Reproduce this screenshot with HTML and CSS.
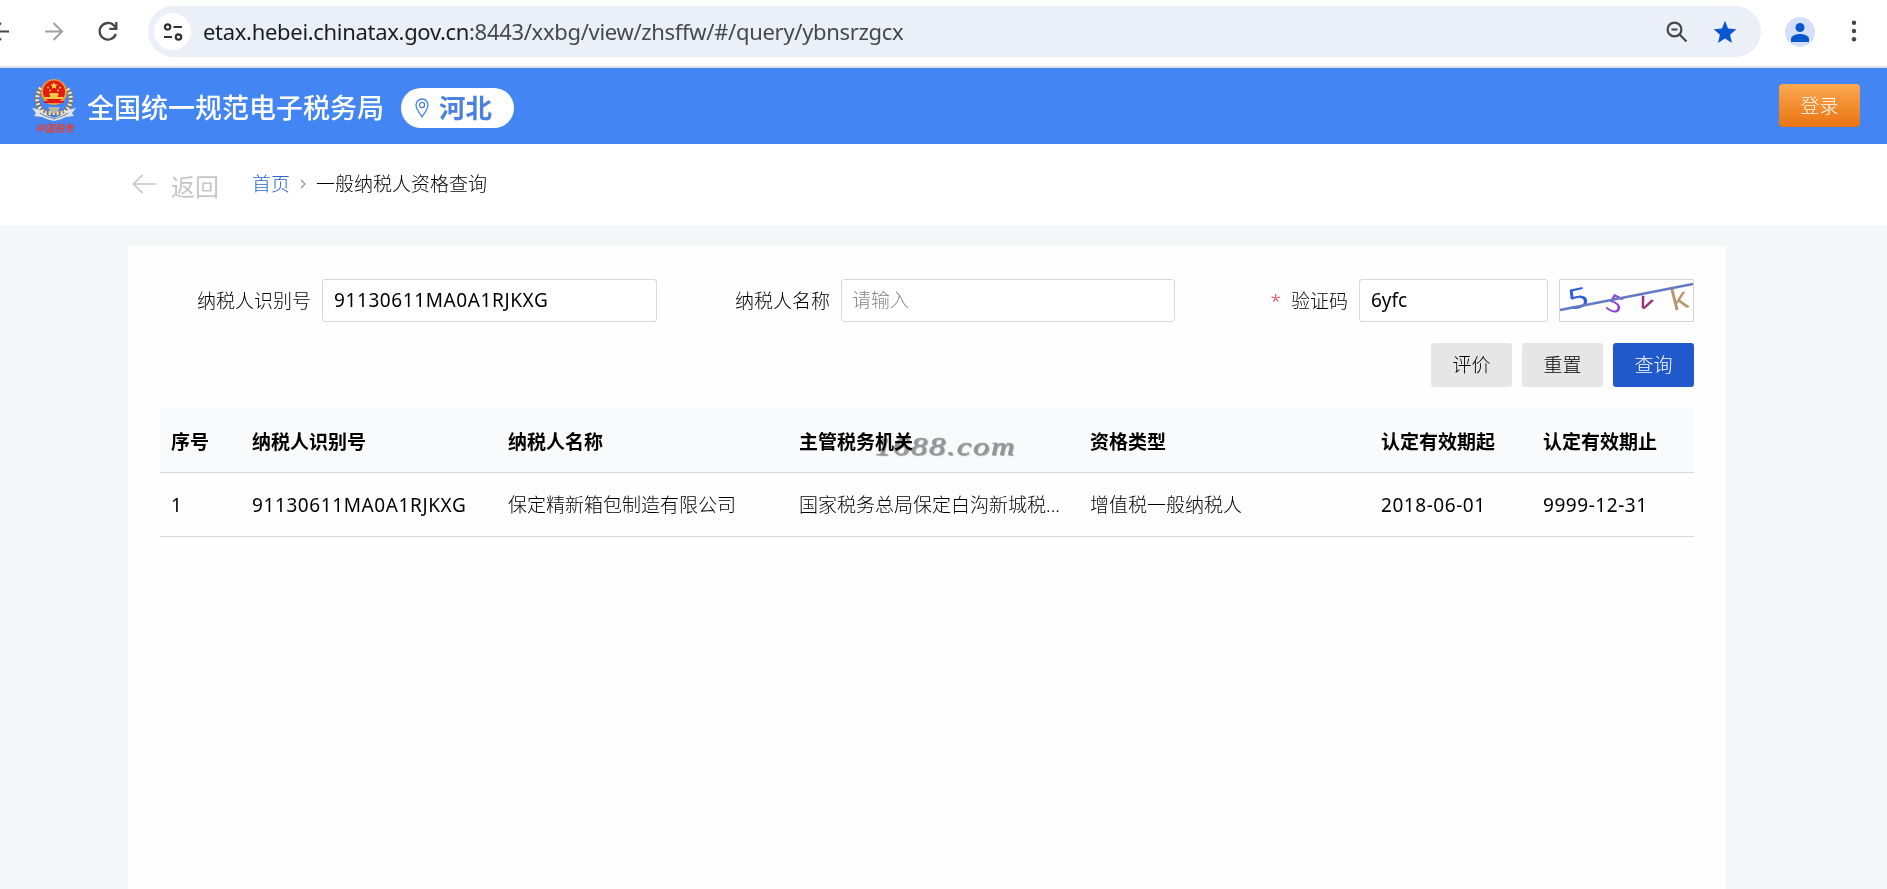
FILE: index.html
```html
<!DOCTYPE html>
<html lang="zh-CN">
<head>
<meta charset="utf-8">
<title>一般纳税人资格查询</title>
<link rel="stylesheet" href="styles.css">
</head>
<body>
<div class="browser">
  <svg class="nav-icons" width="148" height="62" viewBox="0 0 148 62" fill="none">
    <g stroke="#474747" stroke-width="2"><path d="M-8 31.5H9M1 23l-8.500 8.500 8.500 8.500"/></g>
    <g stroke="#a0a0a0" stroke-width="2"><path d="M45 31.500H62M53.500 23l8.500 8.500-8.500 8.500"/></g>
    <path d="M115.800 34a8.300 8.300 0 1 1-1.600-8.200l2 2.200" stroke="#474747" stroke-width="2.300"/>
    <path d="M116.300 22v6.800h-7" stroke="#474747" stroke-width="2.300"/>
  </svg>
  <div class="omnibox">
    <span class="site-info">
      <svg width="20" height="18" viewBox="0 0 20 18" fill="none" stroke="#303236" stroke-width="2.200">
        <circle cx="4.600" cy="4" r="2.700"/><path d="M10.500 4H19M1 14h8"/><circle cx="15.500" cy="14" r="2.700"/>
      </svg>
    </span>
    <div class="url"><span class="host">etax.hebei.chinatax.gov.cn</span>:8443/xxbg/view/zhsffw/#/query/ybnsrzgcx</div>
    <svg class="zoom-icon" width="22" height="22" viewBox="0 0 22 22" fill="none" stroke="#474747" stroke-width="2.200">
      <circle cx="8.500" cy="8.500" r="6.900"/><path d="M13.500 13.500L20.500 20.500M5.500 8.500h6"/>
    </svg>
    <svg class="star" width="24" height="24" viewBox="0 0 24 24" fill="#0b57d0"><path d="M12 .8l3.100 7.800 8.200.7-6.200 5.500 1.900 8.200-7-4.400L5 23l1.900-8.200L.7 9.300l8.200-.7z"/></svg>
  </div>
  <span class="avatar"><svg width="18" height="19" viewBox="0 0 18 19" fill="#0b57d0"><circle cx="9" cy="4.500" r="4.500"/><path d="M0 19v-3c0-3.400 5-5 9-5s9 1.600 9 5v3z"/></svg></span>
  <svg class="dots" width="6" height="22" viewBox="0 0 6 22" fill="#474747"><circle cx="3" cy="2.800" r="2.200"/><circle cx="3" cy="11" r="2.200"/><circle cx="3" cy="19.200" r="2.200"/></svg>
</div>

<header class="topbar">
  <svg class="emblem" width="44" height="58" viewBox="0 0 44 58">
    <path d="M9 10C3 18 4 29 13 35h18c9-6 10-17 4-25" fill="none" stroke="#77756c" stroke-width="5"/>
    <path d="M9 10C3 18 4 29 13 35h18c9-6 10-17 4-25" fill="none" stroke="#e9e6da" stroke-width="4" stroke-dasharray="2 2"/>
    <path d="M0 30l9 2c4 5 8 6 13 8 5-2 9-3 13-8l9-2-4 5 2 3-8 1c-4 2-8 3-12 4-4-1-8-2-12-4l-8-1 2-3z" fill="#dfe3e8"/>
    <path d="M8 35c5 4 9 4 14 6 5-2 9-2 14-6" fill="none" stroke="#8b97a8" stroke-width="1.200"/>
    <path d="M16 29h12l-3 6h-6z" fill="#b8b5a4"/>
    <circle cx="22" cy="14" r="13" fill="#f09a35"/>
    <circle cx="22" cy="13.500" r="11" fill="#e01a14"/>
    <path d="M22 4l1 2.400 2.600.2-2 1.700.6 2.500-2.200-1.300-2.200 1.300.6-2.500-2-1.700 2.600-.2z" fill="#ffe14a"/>
    <g fill="#ffc83a"><circle cx="16" cy="9.500" r="1"/><circle cx="28" cy="9.500" r="1"/><circle cx="18" cy="12.500" r="1"/><circle cx="26" cy="12.500" r="1"/><path d="M18 15h8l1 2h-1v2h5v2H13v-2h5v-2h-1z"/></g>
    <path d="M12 23h20v2H12z" fill="#e01a14"/>
    <text class="emblem-text" x="3" y="54" textLength="39" lengthAdjust="spacingAndGlyphs">中国税务</text>
  </svg>
  <h1 class="site-title">全国统一规范电子税务局</h1>
  <div class="region">
    <svg width="14" height="20" viewBox="0 0 14 20" fill="none" stroke="#4a7fdc" stroke-width="1.300"><path d="M7 18.800C4 14.500 1 11 1 7a6 6 0 0 1 12 0c0 4-3 7.500-6 11.800z"/><circle cx="7" cy="7" r="2.600"/></svg>
    <span>河北</span>
  </div>
  <button class="login">登录</button>
</header>

<nav class="crumbs">
  <svg width="24" height="20" viewBox="0 0 24 20" fill="none" stroke="#c4c4c4" stroke-width="1.600"><path d="M24 10H1.500M10.500 1l-9 9 9 9"/></svg>
  <span class="back">返回</span>
  <a class="home">首页</a>
  <svg class="chev" width="6" height="10" viewBox="0 0 6 10" fill="none" stroke="#999" stroke-width="1.300"><path d="M1 1l4 4-4 4"/></svg>
  <span class="here">一般纳税人资格查询</span>
</nav>

<main class="card">
  <div class="form">
    <label class="lab lab-id">纳税人识别号</label>
    <div class="field field-id"><span class="code">91130611MA0A1RJKXG</span></div>
    <label class="lab lab-name">纳税人名称</label>
    <div class="field field-name placeholder">请输入</div>
    <label class="lab lab-code"><i class="req">*</i>验证码</label>
    <div class="field field-code">6yfc</div>
    <svg class="captcha" width="135" height="43" viewBox="0 0 135 43" fill="none">
      <text transform="translate(11 31) rotate(-12) scale(1.300 1)" font-size="28" fill="#2d5fd8">5</text>
      <text transform="translate(45 29) rotate(26) scale(1.200 1)" font-size="24" fill="#9440cf">5</text>
      <text transform="translate(78 27) rotate(24) scale(1.150 1)" font-size="22" fill="#9c2f76" class="bold">v</text>
      <text transform="translate(114 32) rotate(-14) scale(1.100 1)" font-size="30" fill="#b8946a">k</text>
      <path d="M1 31L134 5" stroke="#6379c6" stroke-width="2.300"/>
      <path d="M.5.5h134v42H.5z" stroke="#d5d5d8"/>
    </svg>
  </div>
  <div class="actions">
    <button class="btn">评价</button>
    <button class="btn">重置</button>
    <button class="btn primary">查询</button>
  </div>
  <div class="grid-wrap">
    <table class="grid">
      <colgroup><col class="c-no"><col class="c-id"><col class="c-wide"><col class="c-wide"><col class="c-wide"><col class="c-date"><col class="c-date"></colgroup>
      <thead><tr><th>序号</th><th>纳税人识别号</th><th>纳税人名称</th><th>主管税务机关</th><th>资格类型</th><th>认定有效期起</th><th>认定有效期止</th></tr></thead>
      <tbody><tr><td><span class="date">1</span></td><td><span class="code">91130611MA0A1RJKXG</span></td><td>保定精新箱包制造有限公司</td><td>国家税务总局保定白沟新城税...</td><td>增值税一般纳税人</td><td><span class="date">2018-06-01</span></td><td><span class="date">9999-12-31</span></td></tr></tbody>
    </table>
    <span class="watermark">1688.com</span>
  </div>
</main>
</body>
</html>
```
FILE: styles.css
```css
* { box-sizing: border-box; }
body {
  margin: 0;
  height: 889px;
  overflow: hidden;
  background: #f5f6f8;
  color: #000;
  font: 300 19px/28px "Noto Sans", "Noto Sans CJK SC", sans-serif;
  display: flex;
  flex-direction: column;
}
button { border: 0; padding: 0; font: inherit; }
svg { flex: none; display: block; }

.browser {
  height: 68px;
  flex: none;
  display: flex;
  align-items: flex-start;
  background: #fff;
  border-bottom: 2px solid #dfe1e5;
}
.omnibox {
  width: 1613px;
  height: 51px;
  margin-top: 6px;
  padding: 0 24px 0 6px;
  border-radius: 26px;
  background: #ebeff8;
  display: flex;
  align-items: center;
}
.site-info {
  width: 37px;
  height: 37px;
  border-radius: 50%;
  background: #fff;
  display: flex;
  align-items: center;
  justify-content: center;
}
.url {
  flex: 1;
  margin-left: 12px;
  padding-bottom: 2px;
  font-size: 22px;
  font-weight: 400;
  color: #47494d;
  letter-spacing: -0.31px;
  white-space: nowrap;
}
.host { color: #1c1d1f; }
.zoom-icon { margin-right: 25px; }
.avatar {
  width: 30px;
  height: 30px;
  margin: 17px 36px 0 24px;
  border-radius: 50%;
  background: #d3e0fb;
  display: flex;
  align-items: center;
  justify-content: center;
}
.dots { margin-top: 20px; }

.topbar {
  height: 76px;
  flex: none;
  padding: 0 27px 0 32px;
  background: #4485f4;
  display: flex;
  align-items: center;
}
.emblem { margin-top: 1px; }
.emblem-text {
  font: italic 700 10px "Noto Sans CJK SC", sans-serif;
  fill: #d8443c;
}
.site-title {
  margin: 2px 0 0 11px;
  width: 301px;
  font: 500 27px/40px "Noto Sans CJK SC", sans-serif;
  color: #fff;
  white-space: nowrap;
}
.region {
  width: 113px;
  height: 40px;
  margin: 4px 0 0 13px;
  padding-left: 14px;
  border-radius: 20px;
  background: #fff;
  color: #4a80e0;
  font: 700 26.500px/40px "Noto Sans CJK SC", sans-serif;
  display: flex;
  align-items: center;
  gap: 10px;
}
.region span { margin-top: -2px; }
.login {
  width: 81px;
  height: 43px;
  margin: -1px 0 0 auto;
  border-radius: 4px;
  background: linear-gradient(#fba94f, #ea7312);
  color: #fff;
}

.crumbs {
  height: 81px;
  flex: none;
  padding: 0 132px 2px;
  background: #fff;
  display: flex;
  align-items: center;
}
.back {
  margin: 6px 33px 0 15px;
  font-size: 24px;
  font-weight: 400;
  color: #c6c6c6;
}
.home { color: #2a66d0; }
.chev { margin: 0 10px; }

.card {
  width: 1598px;
  margin: 21px 0 0 128px;
  padding: 33px 32px 0;
  flex: 1;
  background: #fefefe;
}
.form {
  height: 43px;
  display: flex;
  align-items: center;
}
.lab { padding-right: 1px; text-align: right; white-space: nowrap; }
.lab-id { width: 152px; }
.lab-name { width: 174px; }
.lab-code { width: 174px; }
.req { margin-right: 10px; color: #e0404e; font-style: normal; }
.field {
  height: 43px;
  margin-left: 10px;
  padding: 0 11px;
  border: 1px solid #d8d8dc;
  border-radius: 3px;
  background: #fff;
  font-weight: 400;
  line-height: 41px;
}
.field-id { width: 335px; }
.field-name { width: 334px; }
.field-code { width: 189px; }
.placeholder { padding-left: 10px; color: #888; font-weight: 300; }
.captcha {
  margin-left: auto;
  font-family: "Noto Sans", sans-serif;
  font-weight: 400;
  overflow: visible;
}
.bold { font-weight: 500; }
.code { letter-spacing: 0.6px; }
.code, .date { font-weight: 400; }
.date { letter-spacing: 0.55px; }

.actions {
  display: flex;
  justify-content: flex-end;
  gap: 10px;
  margin: 21px 0;
}
.btn {
  width: 81px;
  height: 44px;
  border-radius: 3px;
  background: #e6e6e6;
  color: #000;
}
.primary { background: #1f59cb; color: #fff; }

.grid-wrap { position: relative; }
.grid {
  width: 1534px;
  table-layout: fixed;
  border-collapse: separate;
  border-spacing: 0;
}
.grid th, .grid td {
  height: 64px;
  padding: 1px 0 0 11px;
  border-bottom: 1px solid #d6d8da;
  text-align: left;
  white-space: nowrap;
}
.grid th { height: 65px; padding-top: 4px; background: #f9fafb; color: #000; font-weight: 700; }
.c-no { width: 81px; }
.c-id { width: 256px; }
.c-wide { width: 291px; }
.c-date { width: 162px; }
.watermark {
  position: absolute;
  left: 715px;
  top: 23px;
  font: italic 400 26px/32px "Liberation Serif", serif;
  letter-spacing: 1.500px;
  transform: scaleX(1.24);
  transform-origin: left;
  color: #97999c;
  -webkit-text-stroke: 0.4px #97999c;
  text-shadow: 1px 1px 1px #999;
  mix-blend-mode: multiply;
}
```
